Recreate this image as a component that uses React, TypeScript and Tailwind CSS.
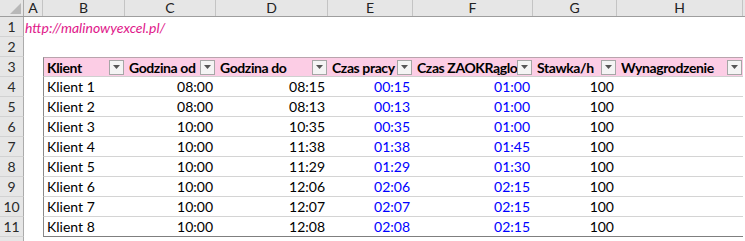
import React from "react";

const font = { fontFamily: "Lato, 'Liberation Sans', sans-serif" };

const cols = [
  { key: "A", w: "w-[19px]" },
  { key: "B", w: "w-[82px]" },
  { key: "C", w: "w-[91px]" },
  { key: "D", w: "w-[112px]" },
  { key: "E", w: "w-[85px]" },
  { key: "F", w: "w-[120px]" },
  { key: "G", w: "w-[84px]" },
  { key: "H", w: "w-[126px]" },
];

const headers = [
  "Klient",
  "Godzina od",
  "Godzina do",
  "Czas pracy",
  "Czas ZAOKRąglone",
  "Stawka/h",
  "Wynagrodzenie",
];

const rows = [
  ["Klient 1", "08:00", "08:15", "00:15", "01:00", "100"],
  ["Klient 2", "08:00", "08:13", "00:13", "01:00", "100"],
  ["Klient 3", "10:00", "10:35", "00:35", "01:00", "100"],
  ["Klient 4", "10:00", "11:38", "01:38", "01:45", "100"],
  ["Klient 5", "10:00", "11:29", "01:29", "01:30", "100"],
  ["Klient 6", "10:00", "12:06", "02:06", "02:15", "100"],
  ["Klient 7", "10:00", "12:07", "02:07", "02:15", "100"],
  ["Klient 8", "10:00", "12:08", "02:08", "02:15", "100"],
];

function RowHeader({ n }: { n?: string }) {
  return (
    <div className="w-6 shrink-0 h-full flex items-center justify-center bg-[#e6e6e6] border-r border-b border-r-[#ababab] border-b-[#d2d2d2] text-[14px] text-[#2a2a2a]">
      {n}
    </div>
  );
}

function FilterButton() {
  return (
    <div className="w-[15px] h-[15px] shrink-0 mr-[1px] border border-[#a6a6a6] bg-[#f4f4f4] flex items-center justify-center">
      <svg width="7" height="4" viewBox="0 0 7 4">
        <path d="M0 0h7L3.5 4z" fill="#555" />
      </svg>
    </div>
  );
}

export default function App() {
  return (
    <div className="w-[745px] h-[241px] overflow-hidden bg-white text-black" style={font}>
      {/* column headers */}
      <div className="flex h-[17px] bg-[#e6e6e6] border-b border-[#9e9e9e]">
        <div className="w-6 shrink-0 border-r border-[#ababab] flex items-end justify-end p-[2px]">
          <svg width="11" height="11" viewBox="0 0 11 11">
            <path d="M11 0v11H0z" fill="#b8b8b8" />
          </svg>
        </div>
        {cols.map((c) => (
          <div
            key={c.key}
            className={`${c.w} shrink-0 border-r border-[#c4c4c4] flex items-center justify-center text-[14px] text-[#222] leading-none`}
          >
            {c.key}
          </div>
        ))}
        <div className="flex-1" />
      </div>

      {/* row 1 */}
      <div className="flex h-5">
        <RowHeader n="1" />
        <div className="pl-[1px] flex items-center whitespace-nowrap italic text-[14px] text-[#e0188a]">
          http://malinowyexcel.pl/
        </div>
      </div>

      {/* row 2 */}
      <div className="flex h-5">
        <RowHeader n="2" />
      </div>

      {/* row 3 - table header */}
      <div className="flex h-5">
        <RowHeader n="3" />
        <div className="w-[19px] shrink-0" />
        <div className="flex border-t border-l border-b border-t-[#b9a4ad] border-l-[#8a8a8a] border-b-[#d0d0d0] bg-[#fccde5] w-[700px]">
          {headers.map((h, i) => (
            <div key={h} className={`${cols[i + 1].w} shrink-0 flex items-center pl-[4px] ${i === 0 ? "-ml-px" : ""}`}>
              <span className="flex-1 min-w-0 overflow-hidden whitespace-nowrap font-bold text-[14px] tracking-[-0.4px]">{h}</span>
              <FilterButton />
            </div>
          ))}
        </div>
      </div>

      {/* data rows */}
      {rows.map((r, ri) => (
        <div key={ri} className="flex h-5">
          <RowHeader n={String(ri + 4)} />
          <div className="w-[19px] shrink-0" />
          <div
            className={`flex w-[700px] border-l border-b border-l-[#8a8a8a] ${
              ri === rows.length - 1 ? "border-b-[#7f7f7f]" : "border-b-[#d4d4d4]"
            } text-[14px]`}
          >
            <div className="w-[81px] shrink-0 flex items-center pl-[3px]">{r[0]}</div>
            <div className="w-[91px] shrink-0 flex items-center justify-end pr-[3px]">{r[1]}</div>
            <div className="w-[112px] shrink-0 flex items-center justify-end pr-[3px]">{r[2]}</div>
            <div className="w-[85px] shrink-0 flex items-center justify-end pr-[3px] text-[#0000ff]">{r[3]}</div>
            <div className="w-[120px] shrink-0 flex items-center justify-end pr-[3px] text-[#0000ff]">{r[4]}</div>
            <div className="w-[84px] shrink-0 flex items-center justify-end pr-[3px]">{r[5]}</div>
            <div className="w-[126px] shrink-0" />
          </div>
        </div>
      ))}

      {/* row 12 (partial) */}
      <div className="flex h-5">
        <RowHeader />
      </div>
    </div>
  );
}
